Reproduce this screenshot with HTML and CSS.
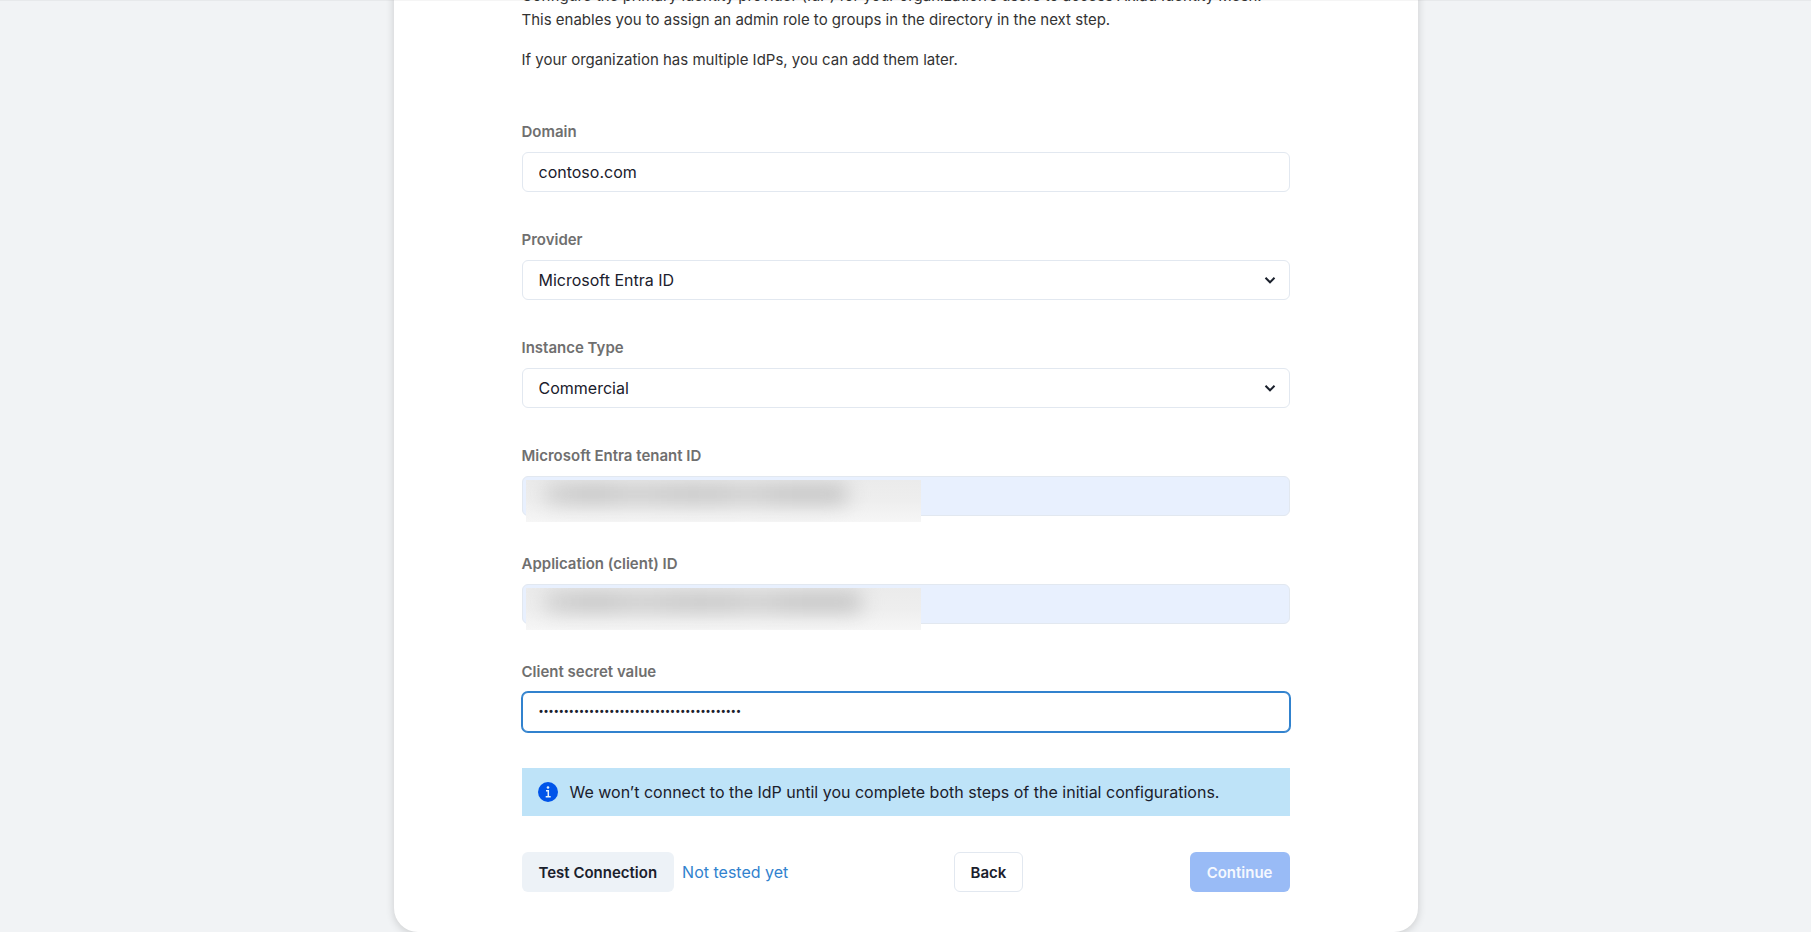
FILE: index.html
```
<!DOCTYPE html>
<html lang="en">
<head>
  <meta charset="UTF-8">
  <title>Identity provider setup</title>
  <link rel="stylesheet" href="styles.css">
</head>
<body>

  <main class="page">
    <form class="card">
      <div class="intro">
        <p>Configure the primary identity provider (IdP) for your organization’s users to access Axiad Identity Mesh. This enables you to assign an admin role to groups in the directory in the next step.</p>
        <p>If your organization has multiple IdPs, you can add them later.</p>
      </div>

      <div class="field">
        <label for="domain">Domain</label>
        <input type="text" id="domain" value="contoso.com">
      </div>

      <div class="field">
        <label for="provider">Provider</label>
        <div class="control">
          <select id="provider">
            <option>Microsoft Entra ID</option>
          </select>
          <svg class="chevron" viewBox="0 0 20 20" aria-hidden="true"><path d="M5.500 7.800l4.500 4.500L14.500 7.800"/></svg>
        </div>
      </div>

      <div class="field">
        <label for="instance">Instance Type</label>
        <div class="control">
          <select id="instance">
            <option>Commercial</option>
          </select>
          <svg class="chevron" viewBox="0 0 20 20" aria-hidden="true"><path d="M5.500 7.800l4.500 4.500L14.500 7.800"/></svg>
        </div>
      </div>

      <div class="field">
        <label for="tenant">Microsoft Entra tenant ID</label>
        <div class="control">
          <input type="text" id="tenant" class="autofilled">
          <div class="redacted"><span class="smudge"></span></div>
        </div>
      </div>

      <div class="field">
        <label for="client">Application (client) ID</label>
        <div class="control">
          <input type="text" id="client" class="autofilled">
          <div class="redacted"><span class="smudge smudge-wide"></span></div>
        </div>
      </div>

      <div class="field">
        <label for="secret">Client secret value</label>
        <input type="password" id="secret" class="active" value="abcdefghijabcdefghijabcdefghijabcdefghij">
      </div>

      <div class="alert">
        <svg class="info" viewBox="0 0 20 20" aria-hidden="true">
          <circle cx="10" cy="10" r="10" fill="#0054e9"/>
          <circle cx="10" cy="5.500" r="1.300" fill="#e6f3fc"/>
          <path d="M8 8.700h2.300v6M7.700 14.700h5" fill="none" stroke="#e6f3fc" stroke-width="1.500"/>
        </svg>
        <span>We won’t connect to the IdP until you complete both steps of the initial configurations.</span>
      </div>

      <div class="actions">
        <div class="test">
          <button type="button" class="btn btn-gray">Test Connection</button>
          <span class="status">Not tested yet</span>
        </div>
        <div class="nav">
          <button type="button" class="btn btn-outline">Back</button>
          <button type="submit" class="btn btn-primary" disabled>Continue</button>
        </div>
      </div>
    </form>
  </main>

</body>
</html>
```
FILE: styles.css
```
* { box-sizing: border-box; }
body { margin: 0; background: #f1f3f5; color: #1a202c; font-family: "Inter", sans-serif; font-size: 16px; line-height: 24px; }

/* scrolled to the end of the form */
.page { display: flex; flex-direction: column; justify-content: flex-end; align-items: center; height: 100vh; overflow: hidden; }
.page::before { content: ""; position: fixed; top: 0; left: 0; right: 0; height: 1px; background: rgba(0, 0, 0, 0.04); }
.card { width: 100%; max-width: 1024px; padding: 40px 128px; background: #fff; border-radius: 24px; box-shadow: 0 2px 8px rgba(0, 0, 0, 0.16); }

.intro { margin-bottom: 48px; color: #333; font-size: 15px; }
.intro p { margin: 0 0 16px; }

.field { margin-bottom: 36px; }
.field label { display: block; margin-bottom: 8px; color: #6f6f6f; font-size: 15px; font-weight: 600; }
.control { position: relative; }
input, select { display: block; width: 100%; height: 40px; padding: 0 16px; border: 1px solid #e2e8f0; border-radius: 6px; background: #fff; color: #1a202c; font: inherit; outline: none; appearance: none; }
.autofilled { background: #e8f0fe; }
.active { border-color: #3182ce; box-shadow: 0 0 0 1px #3182ce; }
input[type="password"] { font-family: "Roboto", sans-serif; font-size: 15px; }
.chevron { position: absolute; top: 10px; right: 10px; width: 20px; height: 20px; fill: none; stroke: #1a202c; stroke-width: 2; pointer-events: none; }

.redacted { position: absolute; top: 4px; left: 4px; width: 395px; height: 42px; overflow: hidden; background: linear-gradient(#ebebeb, #eee 50%, #f6f6f6); }
.smudge { display: block; width: 304px; height: 20px; margin: 4px 0 0 18px; border-radius: 8px; background: linear-gradient(90deg, #d0d0d0, #c2c2c2 16%, #cdcdcd 30%, #c5c5c5 45%, #c6c6c6 58%, #cecece 66%, #c3c3c3 80%, #c3c3c3); filter: blur(10px); }
.smudge-wide { width: 318px; }

.alert { display: flex; align-items: center; gap: 12px; margin-bottom: 36px; padding: 12px 16px; background: #bee3f8; }
.info { width: 20px; height: 20px; flex: none; }

.actions { display: flex; justify-content: space-between; }
.test { display: flex; align-items: center; gap: 8px; }
.nav { display: flex; justify-content: space-between; width: 336px; }
.status { color: #3182ce; }
.btn { height: 40px; padding: 0 16px; border: 1px solid transparent; border-radius: 6px; font-family: inherit; font-size: 15px; font-weight: 600; color: #1a202c; cursor: pointer; }
.btn-gray { background: #edf2f7; }
.btn-outline { background: #fff; border-color: #e2e8f0; }
.btn-primary { background: #99bbf6; color: #f5f8fe; cursor: not-allowed; }
```
